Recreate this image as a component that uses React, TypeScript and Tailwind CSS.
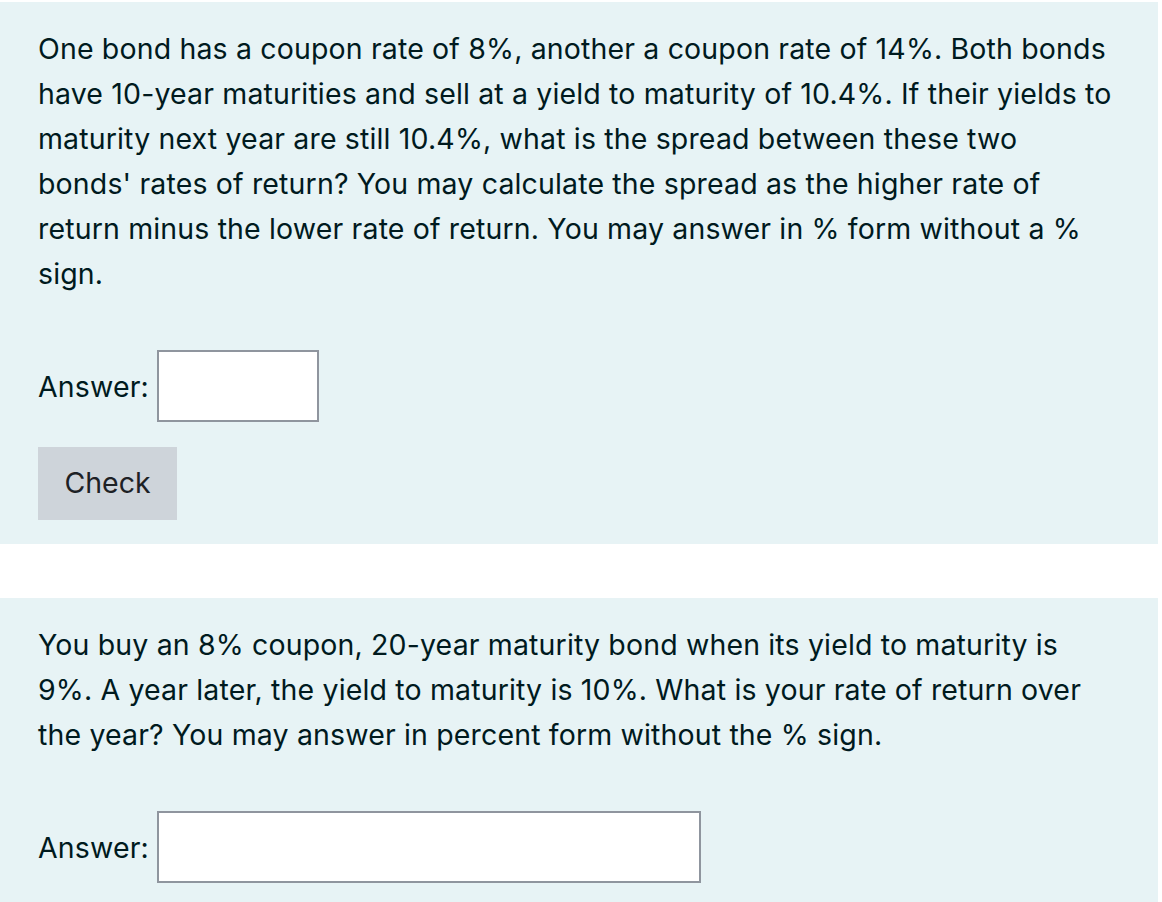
import React from 'react';

const questions = [
  {
    lines: [
      'One bond has a coupon rate of 8%, another a coupon rate of 14%. Both bonds',
      'have 10-year maturities and sell at a yield to maturity of 10.4%. If their yields to',
      'maturity next year are still 10.4%, what is the spread between these two',
      "bonds' rates of return? You may calculate the spread as the higher rate of",
      'return minus the lower rate of return. You may answer in % form without a %',
      'sign.',
    ],
    inputWidth: 'w-[162px]',
    check: true,
  },
  {
    lines: [
      'You buy an 8% coupon, 20-year maturity bond when its yield to maturity is',
      '9%. A year later, the yield to maturity is 10%. What is your rate of return over',
      'the year? You may answer in percent form without the % sign.',
    ],
    inputWidth: 'w-[544px]',
    check: false,
  },
];

const Question: React.FC<{ q: (typeof questions)[number] }> = ({ q }) => (
  <div className="w-[1158px] bg-[#e7f3f5] text-[#001a1e] px-[38px] pt-[24px] pb-[24px]">
    {/* Question text */}
    <p className="text-[28.5px] tracking-[0.15px] leading-[45px] whitespace-nowrap">
      {q.lines.map((line, i) => (
        <React.Fragment key={i}>
          {line}
          {i < q.lines.length - 1 && <br />}
        </React.Fragment>
      ))}
    </p>

    {/* Answer row */}
    <div className="flex items-center mt-[54px]">
      <label className="w-[119px] text-[28.5px] tracking-[0.15px] leading-[45px]">Answer:</label>
      <input
        type="text"
        className={`${q.inputWidth} h-[72px] bg-white border-2 border-[#8f959e] outline-none px-3 text-[28px]`}
      />
    </div>

    {q.check && (
      <button className="mt-[25px] w-[139px] h-[73px] bg-[#ced4da] text-[#1d2125] text-[28.5px] flex items-center justify-center">
        Check
      </button>
    )}
  </div>
);

export default function App() {
  return (
    <div
      className="min-h-[902px] bg-white pt-[2px] flex flex-col gap-[54px]"
      style={{ fontFamily: 'Inter, "Noto Sans", sans-serif' }}
    >
      {questions.map((q, i) => (
        <Question key={i} q={q} />
      ))}
    </div>
  );
}
